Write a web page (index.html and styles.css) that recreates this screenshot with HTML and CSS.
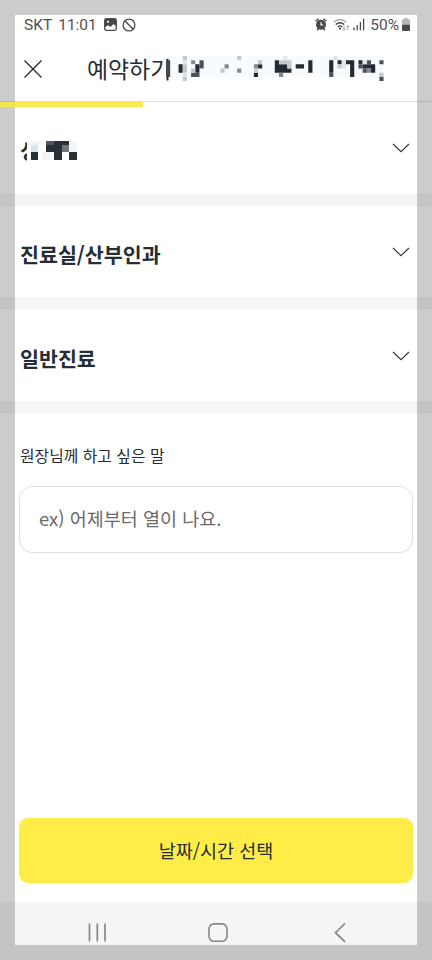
FILE: index.html
```
<!DOCTYPE html>
<html lang="ko">
<head>
<meta charset="utf-8">
<title>예약하기</title>
<link rel="stylesheet" href="styles.css">
</head>
<body>
<div class="screen">
  <div class="status">
    <span class="status-text">SKT</span>
    <span class="status-text clock">11:01</span>
    <svg class="pic" width="13" height="13" viewBox="0 0 13 13"><rect x=".7" y=".7" width="11.6" height="11.6" rx="1.8" fill="none" stroke="#484848" stroke-width="1.3"/><path d="M1 1h11v7L9.5 6 6.5 9 4.300 7.200 1 9z" fill="#484848"/><circle cx="4" cy="3.800" r="1.100" fill="#fff"/></svg>
    <svg class="block" width="14" height="14" viewBox="0 0 14 14" fill="none" stroke="#484848" stroke-width="1.3"><circle cx="7" cy="7" r="5.900"/><path d="M2.800 2.800l8.400 8.400"/></svg>
    <svg class="alarm" width="12" height="13" viewBox="0 0 12 13"><circle cx="6" cy="6.800" r="5" fill="#484848"/><path d="M.7 3.300L3.500.8M8.500.8l2.800 2.500M2.200 12.300l1.300-1.800M9.800 12.300l-1.300-1.800" stroke="#484848" stroke-width="1.500"/><path d="M6 4v3h2.300" fill="none" stroke="#fff" stroke-width="1.100"/></svg>
    <svg class="wifi" width="17" height="14" viewBox="0 0 17 14" fill="none" stroke-width="1.300"><path d="M.7 4.300q6.300-5.600 12.600 0" stroke="#aaa"/><path d="M2.700 6.600q4.300-3.800 8.600 0M4.700 8.900q2.300-1.900 4.600 0" stroke="#484848"/><circle cx="7" cy="10.600" r="1.100" fill="#484848"/><path d="M11 7.500v4.800M9.500 10.800l1.500 1.500 1.500-1.500M14.700 12V7.500M13.200 9l1.500-1.500L16.200 9" stroke="#aaa" stroke-width="1"/></svg>
    <svg class="signal" width="12" height="13" viewBox="0 0 12 13" stroke="#484848" stroke-width="1.300"><path d="M1 12.300V9.500M4.200 12.300V7M7.400 12.300V4M10.600 12.300V.8"/></svg>
    <span class="status-text percent">50%</span>
    <svg class="battery" width="8" height="13" viewBox="0 0 8 13"><path d="M2.300 0h3.400v1.300H7q1 0 1 1V7H0V2.300q0-1 1-1h1.300z" fill="#b9b9b9"/><path d="M0 6.700h8V12q0 1-1 1H1q-1 0-1-1z" fill="#484848"/></svg>
  </div>

  <header class="header">
    <svg class="close" width="18" height="18" viewBox="0 0 18 18" fill="none" stroke="#252b31" stroke-width="1.250"><path d="M.5.500l17 17M17.500.500l-17 17"/></svg>
    <h1 class="title">예약하기</h1>
    <svg class="mosaic" width="222" height="26" viewBox="0 0 53.060 6.210" preserveAspectRatio="none">
      <path fill="#f8fbfe" d="M1 0h51v5H1z"/>
      <path fill="#45484f" d="M0 1h1v4H0z"/>
      <path fill="#242b33" d="M3 2h1v2H3zM7 2h1v2H7zM22 2h1v1h-1zM21 4h1v1h-1zM26 1h1v3h-1zM27 2h2v2h-2zM29 3h1v1h-1zM31 2h2v1h-2zM34 1h1v3h-1zM39 1h1v3h-1zM41 1h1v1h-1zM43 1h2v1h-2zM44 2h1v3h-1zM47 2h3v1h-3zM49 3h1v1h-1zM46 1h1v1h-1z"/>
      <path fill="#4c5057" d="M8 2h1v1H8zM6 4h2v1H6zM8 1h1v1H8zM51 1h1v1h-1zM51 5h1v1h-1zM39 4h1v1h-1zM46 2h1v1h-1zM47 3h1v1h-1zM48 1h1v1h-1z"/>
      <path fill="#85898e" d="M6 1h1v1H6zM14 2h1v1h-1zM17 3h1v1h-1zM21 2h1v1h-1zM27 4h1v1h-1zM48 3h1v1h-1z"/>
      <path fill="#c4c7cc" d="M4 0h1v1H4zM4 2h1v2H4zM4 5h1v1H4zM6 3h1v1H6zM13 3h1v1h-1zM17 0h1v1h-1zM21 3h1v1h-1zM22 1h1v1h-1zM27 1h3v1h-3zM29 2h1v1h-1zM41 2h1v1h-1zM51 4h1v1h-1z"/>
      <path fill="#e2e6ea" d="M4 1h1v1H4zM4 4h1v1H4zM42 1h1v2h-1zM47 1h1v1h-1zM28 0h1v1h-1zM40 0h1v1h-1z"/>
    </svg>
  </header>
  <div class="progress"><div class="progress-fill"></div></div>

  <main class="sections">
    <section class="row row-first">
      <h2 class="name">성<svg class="name-mosaic" width="50" height="24" viewBox="0 0 50 24" shape-rendering="crispEdges"><path fill="#fff" d="M0 0h50v24H0z"/><path fill="#f3f6f9" d="M1 0h14v4H1zM15 11h8v8h-8zM42 0h8v11h-8z"/><path fill="#dde2e7" d="M4 4h7v7H4z"/><path fill="#292f36" d="M4 11h7v8H4zM27 0h15v4H27zM19 4h16v7H19zM27 11h8v8h-8zM42 11h8v8h-8z"/><path fill="#515458" d="M19 0h8v4h-8z"/><path fill="#74777a" d="M35 4h7v7h-7z"/></svg></h2>
      <svg class="chevron" width="18" height="10" viewBox="0 0 18 10"><path d="M1 1l8 7.600L17 1"/></svg>
    </section>
    <section class="row row-second">
      <h2 class="name">진료실/산부인과</h2>
      <svg class="chevron" width="18" height="10" viewBox="0 0 18 10"><path d="M1 1l8 7.600L17 1"/></svg>
    </section>
    <section class="row row-third">
      <h2 class="name">일반진료</h2>
      <svg class="chevron" width="18" height="10" viewBox="0 0 18 10"><path d="M1 1l8 7.600L17 1"/></svg>
    </section>
    <section class="message">
      <div class="label">원장님께 하고 싶은 말</div>
      <div class="field"><span class="placeholder">ex) 어제부터 열이 나요.</span></div>
    </section>
  </main>
  <div class="submit"><span class="submit-text">날짜/시간 선택</span></div>
  <nav class="nav">
    <svg width="18" height="19" viewBox="0 0 18 19" stroke="#878787" stroke-width="1.700"><path d="M1.500 .5v18M9.300.5v18M17 .5v18"/></svg>
    <svg class="home" width="20" height="19" viewBox="0 0 20 19" fill="none" stroke="#878787" stroke-width="1.600"><rect x="1" y=".9" width="18" height="17.400" rx="5"/></svg>
    <svg width="12" height="20" viewBox="0 0 12 20" fill="none" stroke="#878787" stroke-width="1.700"><path d="M11 .5L1.500 9.700l9.500 9.200"/></svg>
  </nav>
</div>
<div class="frame"></div>
<div class="progress-edge"></div>
</body>
</html>
```
FILE: styles.css
```
* { box-sizing: border-box; }
body {
  margin: 0;
  width: 432px;
  height: 960px;
  overflow: hidden;
  background: #fff;
  color: #252d35;
  font-family: "Noto Sans CJK KR", sans-serif;
}
svg { display: block; flex: none; }
.screen {
  display: flex;
  flex-direction: column;
  height: 960px;
}
.frame {
  position: absolute;
  inset: 0;
  border: 15px solid rgba(0, 0, 0, .2);
}
.progress-edge {
  position: absolute;
  left: 0;
  top: 102px;
  width: 15px;
  height: 5px;
  background: #f3e451;
}
.status {
  display: flex;
  align-items: center;
  height: 19px;
  margin: 15px 0 1px;
  padding: 0 22px 0 24px;
}
.status-text {
  font: 15.500px/20px Roboto, sans-serif;
  color: #505050;
  white-space: nowrap;
}
.clock { margin-left: 6px; }
.pic { margin-left: 7px; }
.block { margin-left: 5px; }
.alarm { margin-left: auto; }
.wifi { margin-left: 6px; }
.signal { margin-left: 3px; }
.percent { margin-left: 5px; }
.battery { margin-left: 3px; }
.header {
  display: flex;
  height: 66px;
  padding-left: 24px;
}
.close { margin-top: 25px; }
.title {
  width: 79px;
  margin: 16px 0 0 45px;
  font-size: 22.900px;
  line-height: 34px;
  font-weight: 400;
  white-space: nowrap;
}
.mosaic { margin-top: 21px; margin-left: .3px; }
.progress {
  height: 6px;
  border-top: 1px solid #dedfe2;
}
.progress-fill {
  width: 143px;
  height: 5px;
  background: #fbea4d;
}
.row {
  display: flex;
  justify-content: space-between;
  align-items: flex-start;
  border-bottom: 12px solid #f4f6f8;
}
.row-first { height: 99px; padding: 28px 22px 0 20px; }
.row-second { height: 103px; padding: 33px 22px 0 20px; }
.row-third { height: 104px; padding: 34px 22px 0 20px; }
.name {
  display: flex;
  margin: 0;
  font-size: 20.600px;
  line-height: 30px;
  font-weight: 700;
}
.name-mosaic { margin: 6px 0 0 -12px; }
.chevron {
  margin-top: 8px;
  fill: none;
  stroke: #343a40;
  stroke-width: 1.200;
}
.message { padding: 31px 19px 0; }
.label {
  margin-left: 1px;
  height: 42px;
  font-size: 15.850px;
  line-height: 24px;
}
.field {
  display: flex;
  align-items: center;
  height: 67px;
  padding: 0 0 3px 19px;
  border: 1px solid #dfe0e1;
  border-radius: 13px;
}
.placeholder {
  font-size: 18.500px;
  color: #6a6a6a;
}
.submit {
  display: flex;
  align-items: center;
  justify-content: center;
  height: 65px;
  padding-bottom: 2px;
  margin: auto 19px 19px;
  border-radius: 9px;
  background: #ffec47;
}
.submit-text { font-size: 18.500px; }
.nav {
  display: flex;
  flex: none;
  justify-content: space-between;
  align-items: flex-start;
  height: 58px;
  padding: 21px 86px 0 88px;
  background: #f5f5f5;
}
.home { margin-right: 4px; }
```
